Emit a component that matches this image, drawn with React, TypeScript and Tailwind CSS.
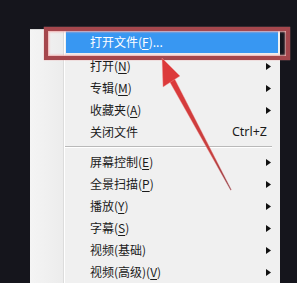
import React from 'react';

type Item = { label: string; key?: string; tail?: string; sub?: boolean; hot?: boolean } | 'sep';

const items: Item[] = [
  { label: '打开文件(', key: 'F', tail: ')...', hot: true },
  { label: '打开(', key: 'N', tail: ')', sub: true },
  { label: '专辑(', key: 'M', tail: ')', sub: true },
  { label: '收藏夹(', key: 'A', tail: ')', sub: true },
  { label: '关闭文件' },
  'sep',
  { label: '屏幕控制(', key: 'E', tail: ')', sub: true },
  { label: '全景扫描(', key: 'P', tail: ')', sub: true },
  { label: '播放(', key: 'Y', tail: ')', sub: true },
  { label: '字幕(', key: 'S', tail: ')', sub: true },
  { label: '视频(基础)', sub: true },
  { label: '视频(高级)(', key: 'V', tail: ')', sub: true },
];

const Caret = () => (
  <svg width="5" height="7" viewBox="0 0 5 7" className="shrink-0">
    <path d="M0 0 L5 3.5 L0 7 Z" fill="#111" />
  </svg>
);

const App: React.FC = () => {
  return (
    <div className="relative w-[297px] h-[283px] overflow-hidden bg-[#15151c] font-['Noto_Sans_CJK_SC',sans-serif] text-[12px]">
      {/* context menu */}
      <div className="ml-[30px] pt-[29px]">
        <div className="flex w-[250px] h-[260px] bg-[#f0f0f0] border-t border-[#d9d9d9]">
          {/* icon gutter */}
          <div className="w-[34px] shrink-0 bg-gradient-to-r from-[#f4f4f4] to-[#ececec] border-r border-[#dcdcdc]" />
          <div className="flex-1 border-l border-white pt-[1px]">
            {items.map((it, i) => {
              if (it === 'sep') {
                return (
                  <div key={i} className="h-[8px] flex flex-col justify-center mr-[8px]">
                    <div className="h-px bg-[#b9b9b9]" />
                    <div className="h-px bg-white" />
                  </div>
                );
              }
              return (
                <div
                  key={i}
                  className={
                    it.hot
                      ? 'flex items-center h-[22px] ml-[1px] mr-[2px] mb-[2px] pl-[24px] pr-[7px] bg-[#3897f2] text-white'
                      : 'flex items-center h-[22px] ml-[1px] mr-[2px] pl-[24px] pr-[7px] text-[#1b1b1b]'
                  }
                >
                  <span className="flex-1 whitespace-nowrap leading-none">
                    {it.label}
                    {it.key && <span className="underline underline-offset-2">{it.key}</span>}
                    {it.tail}
                  </span>
                  {it.sub && <Caret />}
                  {it.label === '关闭文件' && (
                    <span className="pr-[4px] font-['Noto_Sans',sans-serif] text-[12.5px] leading-none">Ctrl+Z</span>
                  )}
                </div>
              );
            })}
          </div>
        </div>
      </div>

      {/* red highlight box */}
      <div className="absolute left-[44px] top-[27px] w-[246px] h-[33px] border-[4px] border-[#a5474d] shadow-[inset_0_0_2px_1px_#f1b0b0,0_0_1px_#e88]" />

      {/* red arrow */}
      <svg className="absolute left-0 top-0" width="297" height="283" viewBox="0 0 297 283">
        <defs>
          <linearGradient id="shaft" x1="172" y1="80" x2="231" y2="190" gradientUnits="userSpaceOnUse">
            <stop offset="0" stopColor="#dc3a3b" />
            <stop offset="0.7" stopColor="#c4403f" />
            <stop offset="1" stopColor="#7a3a44" />
          </linearGradient>
        </defs>
        <polygon points="174.5,78.5 169.5,81.5 230.6,190.2 231.4,189.8" fill="url(#shaft)" stroke="#f3a3a3" strokeWidth="0.6" strokeOpacity="0.6" />
        <polygon points="162,58 180,76 163,87" fill="#dc3a3b" stroke="#f3a3a3" strokeWidth="0.6" strokeOpacity="0.6" />
      </svg>
    </div>
  );
};

export default App;
